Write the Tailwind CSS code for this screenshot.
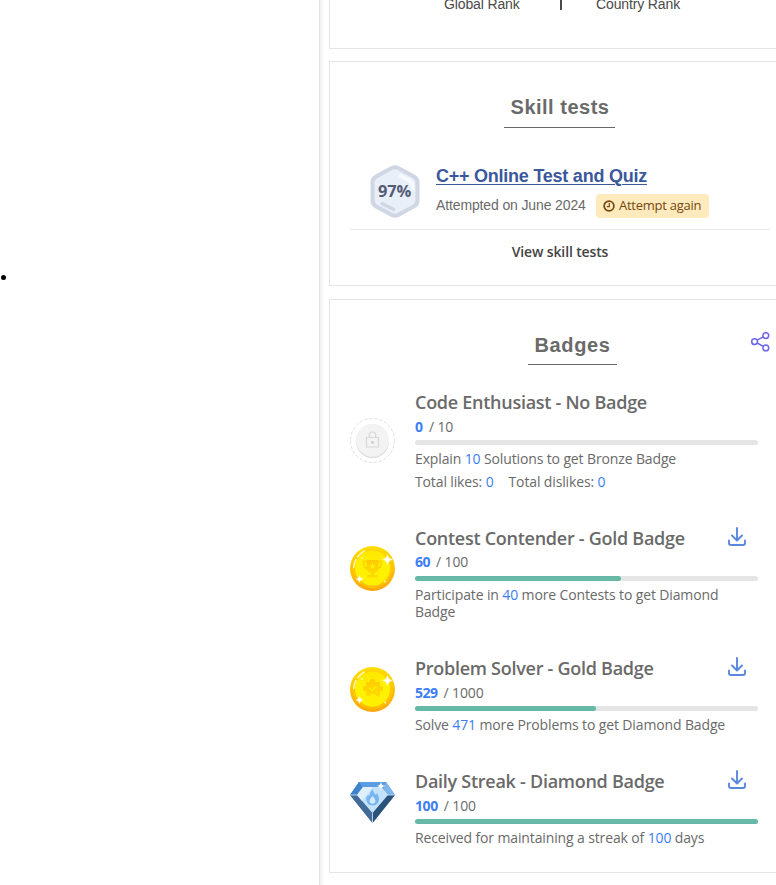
<!DOCTYPE html>
<html lang="en">
<head>
<meta charset="utf-8">
<title>Profile</title>
<script src="https://cdn.jsdelivr.net/npm/@tailwindcss/browser@4"></script>
</head>
<body class="bg-white">
<svg class="absolute size-0">
  <defs>
    <linearGradient id="rim" x1="0" y1="0" x2="0" y2="1"><stop offset="0" stop-color="#ffdf00"/><stop offset="1" stop-color="#ffa50a"/></linearGradient>
    <linearGradient id="face" x1="0" y1="0" x2="0" y2="1"><stop offset="0" stop-color="#ffe600"/><stop offset=".4" stop-color="#fff200"/><stop offset="1" stop-color="#fff000"/></linearGradient>
    <linearGradient id="fig" x1="0" y1="0" x2="0" y2="1"><stop offset="0" stop-color="#ffcb00"/><stop offset="1" stop-color="#ffdc00"/></linearGradient>
    <symbol id="coin" viewBox="0 0 45 45">
      <circle cx="22.5" cy="22.5" r="22.5" fill="url(#rim)"/>
      <circle cx="22.5" cy="22.8" r="19.5" fill="#ffcf00" fill-opacity=".6"/>
      <circle cx="22.5" cy="22" r="17.5" fill="url(#face)"/>
      <path d="M3.7 21.5Q4 17 6 13.5M7.6 10.8Q10 7.5 14.3 5" fill="none" stroke="#fff6a8" stroke-width="1.6" stroke-linecap="round"/>
      <path d="M37.5 8.5Q38.2 12.8 42.5 13.5Q38.2 14.2 37.5 18.5Q36.8 14.2 32.5 13.5Q36.8 12.8 37.5 8.5ZM9.5 29.5Q10 32.5 13 33Q10 33.5 9.5 36.5Q9 33.5 6 33Q9 32.5 9.5 29.5Z" fill="#fff" stroke="#fff" stroke-width=".4"/>
      <circle cx="35" cy="35.5" r="1" fill="#fff3b0"/><circle cx="12" cy="12" r=".8" fill="#fff"/>
    </symbol>
    <symbol id="download" viewBox="0 0 18 19">
      <path d="M9 1v12M4 8.500l5 5 5-5M1 13.500V16q0 2 2 2h12q2 0 2-2v-2.500" fill="none" stroke="#5a87de" stroke-width="1.900" stroke-linecap="round" stroke-linejoin="round"/>
    </symbol>
  </defs>
</svg>
<div class="flex h-[885px] w-[776px] overflow-hidden font-['Open_Sans',sans-serif] text-sm tracking-[-0.13px] text-[#6a6a6a]">
  <main class="w-[319px] shrink-0 pt-[275px] pl-px">
    <div class="size-[5px] rounded-full bg-black"></div>
  </main>
  <aside class="h-[885px] w-[471px] shrink-0 border-l border-[#e2e2e2] bg-[linear-gradient(to_right,#f3f3f3_2px,#fafafa_2px,#fafafa_3px,#fff_4px)] pl-[9px]">
    <section class="flex h-[49px] w-[462px] border border-t-0 border-[#e4e4e4] bg-white font-['Liberation_Sans',sans-serif] text-[#4a4a4a]">
      <div class="w-[230px] pl-[114px]"><div class="-mt-1 leading-4">Global Rank</div></div>
      <div class="h-2.5 w-0.5 bg-[#4a4a4a]"></div>
      <div class="pl-[34px]"><div class="-mt-1 leading-4">Country Rank</div></div>
    </section>

    <section class="mt-3 h-[225px] w-[462px] border border-[#e4e4e4] bg-white px-5 pt-[33px]">
      <h2 class="ml-[154px] flex h-[33px] w-[111px] justify-center border-b border-[#6a6a6a] pl-px font-['Liberation_Sans',sans-serif] text-xl leading-6 font-bold tracking-[0.5px] whitespace-nowrap text-[#6a6a6a]">Skill tests</h2>
      <div class="flex h-[102px] items-start border-b border-[#e8e8e8] pt-[36px] pl-5">
        <svg class="mt-px w-[50px] shrink-0" height="53" viewBox="0 0 49 54" preserveAspectRatio="none">
          <path d="M21 3.200q3.500-2 7 0l15 8.500q3.500 2 3.500 6v18.500q0 4-3.500 6l-15 8.500q-3.500 2-7 0l-15-8.500q-3.500-2-3.500-6V17.700q0-4 3.500-6z" fill="#e9eff9" stroke="#d0d6e3" stroke-width="4"/>
          <path d="M30 11l8 4.500q4 2 4 9" fill="none" stroke="#f6f9fe" stroke-width="4" stroke-linecap="round"/>
          <path d="M12 39.500l11 5.500" stroke="#d0d6e3" stroke-width="3.500" stroke-linecap="round"/>
          <text x="24" y="32.500" text-anchor="middle" font-family="Open Sans, sans-serif" font-size="16" font-weight="700" fill="#545b75" textLength="32.500" lengthAdjust="spacingAndGlyphs">97%</text>
        </svg>
        <div class="pt-px pl-4 font-['Liberation_Sans',sans-serif]">
          <a class="block h-[28px] text-[18px] leading-[22px] font-bold tracking-[-0.24px] whitespace-nowrap text-[#3a589b] underline decoration-1 underline-offset-2">C++ Online Test and Quiz</a>
          <div class="flex h-6 items-start text-[#6a6a6a]">
            <span class="w-[160px] leading-[24px] whitespace-nowrap">Attempted on June 2024</span>
            <span class="mt-px flex h-6 w-[113px] items-center gap-1 rounded bg-[#ffeabd] pb-px pl-[7px] font-['Open_Sans',sans-serif] text-[13px] tracking-[-0.25px] whitespace-nowrap text-[#73480d]">
              <svg width="12" height="12" viewBox="0 0 12 12" fill="none" stroke="#73480d" stroke-width="1.700"><circle cx="6" cy="6" r="4.900"/><path d="M6.300 3v3.700H3.700" stroke-width="1.200"/></svg>Attempt again</span>
          </div>
        </div>
      </div>
      <div class="pt-3 text-center leading-5 font-semibold tracking-[-0.13px] text-[#444]">View skill tests</div>
    </section>

    <section class="mt-[13px] h-[574px] w-[462px] border border-[#e4e4e4] bg-white pl-5 pt-[31px]">
      <div class="flex h-[54px]">
        <h2 class="mt-[2px] ml-[178px] flex h-[32px] w-[89px] justify-center border-b border-[#6a6a6a] font-['Liberation_Sans',sans-serif] text-xl leading-6 font-bold tracking-[0.6px] text-[#6a6a6a]">Badges</h2>
        <svg class="ml-[134px]" width="19" height="21" viewBox="0 0 19 21" fill="none" stroke="#6d66ea" stroke-width="1.500"><circle cx="3.600" cy="10.600" r="2.900"/><circle cx="14.800" cy="4.600" r="2.900"/><circle cx="14.800" cy="16.900" r="2.900"/><path d="M6.200 9.200l6-3.300M6.200 12l6 3.400"/></svg>
      </div>

      <article class="flex h-[136px]">
        <svg class="mt-[33px] mr-5 shrink-0" width="45" height="45" viewBox="0 0 45 45">
          <circle cx="22.500" cy="22.500" r="22" fill="#fff" stroke="#dedede" stroke-dasharray="3 2"/>
          <circle cx="22.500" cy="23.700" r="16.500" fill="#dedede"/><circle cx="22.500" cy="22.200" r="16.500" fill="#f3f3f3"/>
          <path d="M16.500 19.500h12v9.500h-12zM19.300 19.500V17q0-3 3.200-3t3.200 3v2.500" fill="none" stroke="#d8d8d8" stroke-width="1.200"/><circle cx="22.500" cy="24.300" r="1.500" fill="#d0d0d0"/>
        </svg>
        <div class="w-[343px]">
          <h3 class="h-[31px] text-lg leading-[34px] font-semibold tracking-[-0.27px]">Code Enthusiast - No Badge</h3>
          <p class="h-[24px] leading-[22px]"><b class="mr-1.5 font-bold text-[#3d7df6]">0</b>/ 10</p>
          <div class="h-[5px] rounded-full bg-[#e5e5e5]"></div>
          <p class="mt-[2px] h-[23px] leading-[23px]">Explain <span class="text-[#3d7df6]">10</span> Solutions to get Bronze Badge</p>
          <p class="flex gap-[15px] leading-[23px]"><span>Total likes: <span class="text-[#3d7df6]">0</span></span><span>Total dislikes: <span class="text-[#3d7df6]">0</span></span></p>
        </div>
      </article>

      <article class="flex h-[130px]">
        <svg class="mt-[25px] mr-5 shrink-0" width="45" height="45" viewBox="0 0 45 45">
          <use href="#coin"/><path d="M16.500 14h12v7q0 5-4.500 6v2h4v2.500H17V29h4v-2q-4.500-1-4.500-6z" fill="url(#fig)"/><path d="M16.500 15.500h-3v2q0 4 4 5M28.500 15.500h3v2q0 4-4 5" fill="none" stroke="#ffd000" stroke-width="1.500"/><path d="M22.500 17l.9 2.200 2.300.1-1.800 1.500.6 2.300-2-1.300-2 1.300.6-2.300-1.800-1.500 2.300-.1z" fill="#fff000"/>
        </svg>
        <div class="w-[343px]">
          <div class="flex h-[31px] justify-between"><h3 class="text-lg leading-[34px] font-semibold tracking-[-0.27px]">Contest Contender - Gold Badge</h3><svg class="mt-[5.500px] mr-3" width="18" height="19"><use href="#download"/></svg></div>
          <p class="h-[24px] leading-[20px]"><b class="mr-1.5 font-bold tracking-[-0.5px] text-[#3d7df6]">60</b>/ 100</p>
          <div class="h-[5px] rounded-full bg-[#e5e5e5]"><div class="h-full rounded-full bg-[#65b9a6]" style="width:60%"></div></div>
          <p class="mt-[5px] leading-[17px]">Participate in <span class="text-[#3d7df6]">40</span> more Contests to get Diamond Badge</p>
        </div>
      </article>

      <article class="flex h-[113px]">
        <svg class="mt-[16px] mr-5 shrink-0" width="45" height="45" viewBox="0 0 45 45">
          <use href="#coin"/><path d="M16 15h4q-1-3 2.500-3t2.500 3h5v4q3-.5 3 2.800t-3 2.700v4.500h-4q0-2-3-2t-3 2h-4v-4.500q-3 .5-3-2.700t3-2.800z" fill="url(#fig)"/><path d="M19.500 21l2.500 2.500 4.500-4.500" fill="none" stroke="#fff000" stroke-width="1.200"/>
        </svg>
        <div class="w-[343px]">
          <div class="flex h-[31px] justify-between"><h3 class="text-lg leading-[34px] font-semibold tracking-[-0.27px]">Problem Solver - Gold Badge</h3><svg class="mt-[6px] mr-3" width="18" height="19"><use href="#download"/></svg></div>
          <p class="h-[24px] leading-[22px]"><b class="mr-1.5 font-bold tracking-[-0.5px] text-[#3d7df6]">529</b>/ 1000</p>
          <div class="h-[5px] rounded-full bg-[#e5e5e5]"><div class="h-full rounded-full bg-[#65b9a6]" style="width:52.9%"></div></div>
          <p class="mt-[5px] leading-[17px]">Solve <span class="text-[#3d7df6]">471</span> more Problems to get Diamond Badge</p>
        </div>
      </article>

      <article class="flex">
        <svg class="mt-[16px] mr-5 shrink-0" width="45" height="45" viewBox="0 0 45 45">
          <path d="M9 2h27l9 13-22.500 28L0 15z" fill="#3f7dbc"/>
          <path d="M9 2h27l-3 5H12z" fill="#5c9ce0"/><path d="M36 2l9 13h-8l-4-8z" fill="#7eb6ec"/><path d="M9 2L0 15h8l4-8z" fill="#3d83cd"/>
          <path d="M0 15h8l14.500 18v10z" fill="#426b98"/><path d="M45 15h-8L22.500 33v10z" fill="#2b527b"/>
          <path d="M13 7h19l6 8-15.500 18L7 15z" fill="#c3e2fc"/><path d="M13 7h10L12 21 7 15z" fill="#deefff"/>
          <path d="M22.500 9q1 4 3.500 6l1-2q3 5 1.500 9-2 3.500-6 3.500T17 22q-2-4 1-7l1 1q1-4 3.500-7z" fill="#76b5ed"/><path d="M22.500 16q4 4 2.500 6.500-2.500 2.500-5 0-1.500-2.500 2.500-6.500z" fill="#d3eaff"/>
          <path d="M0 15h8M37 15h8M22.500 33v10" stroke="#b5d4ef"/><path d="M31 2q.5 3.500 4 4-3.500.5-4 4-.5-3.500-4-4 3.500-.5 4-4z" fill="#fff"/>
        </svg>
        <div class="w-[343px]">
          <div class="flex h-[31px] justify-between"><h3 class="text-lg leading-[34px] font-semibold tracking-[-0.27px]">Daily Streak - Diamond Badge</h3><svg class="mt-[6px] mr-3" width="18" height="19"><use href="#download"/></svg></div>
          <p class="h-[24px] leading-[22px]"><b class="mr-1.5 font-bold tracking-[-0.4px] text-[#3d7df6]">100</b>/ 100</p>
          <div class="h-[5px] rounded-full bg-[#65b9a6]"></div>
          <p class="mt-[5px] leading-[17px]">Received for maintaining a streak of <span class="text-[#3d7df6]">100</span> days</p>
        </div>
      </article>
    </section>
  </aside>
</div>
</body>
</html>
